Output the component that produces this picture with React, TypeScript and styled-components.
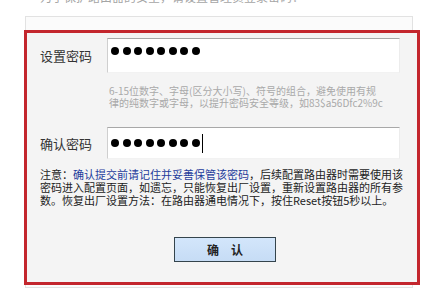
import styled, { createGlobalStyle } from 'styled-components';

// ===== global =====
const Global = createGlobalStyle`
  html, body {
    margin: 0;
    padding: 0;
    background: #ffffff;
    overflow: hidden;
  }
  body {
    font-family: 'Noto Sans CJK SC', 'Noto Sans', sans-serif;
    color: #222;
  }
`;

// ===== styled =====
const Page = styled.div`
  width: 442px;
  height: 290px;
  overflow: hidden;
`;

const CutLine = styled.div`
  margin-top: -11px;
  padding-left: 40px;
  font-size: 12px;
  line-height: 16px;
  color: #a5a5a5;
  white-space: nowrap;
`;

const Panel = styled.section`
  margin: 11px 0 0 25px;
  width: 386px;
  height: 270px;
  border: 1px solid #e2e2e2;
  background: #fbfbfb;
  display: flex;
  flex-direction: column;
`;

const Marked = styled.div`
  margin: 13px -8px 0 -2px;
  height: 244px;
  border: 3px solid #c3262d;
  background: #f4f4f4;
  display: flex;
  flex-direction: column;
  padding: 5px 0 0 13px;
`;

const FieldRow = styled.div<{ h: number }>`
  display: flex;
  align-items: center;
  height: ${({ h }) => h}px;
`;

const Label = styled.label`
  width: 67px;
  flex: none;
  font-size: 13px;
  color: #333;
  white-space: nowrap;
`;

const Field = styled.div<{ lift?: number }>`
  box-sizing: border-box;
  width: 293px;
  height: 100%;
  background: #fff;
  border: 1px solid;
  border-color: #a8a8a8 #ececec #f2f2f2 #cfcfcf;
  display: flex;
  align-items: center;
  gap: 3.5px;
  padding: 0 0 ${({ lift }) => (lift ? lift * 2 : 0)}px 3px;
`;

const Dot = styled.span`
  width: 8px;
  height: 8px;
  border-radius: 50%;
  background: #000;
  flex: none;
`;

const Caret = styled.span`
  width: 1px;
  height: 19px;
  background: #000;
  margin-left: -1px;
`;

const Hint = styled.div`
  margin: 12px 0 0 69px;
  font-size: 10px;
  line-height: 12px;
  color: #a9a9a9;
  white-space: nowrap;
`;

const Gap = styled.div<{ h: number }>`
  height: ${({ h }) => h}px;
  flex: none;
`;

const Note = styled.div`
  margin-top: 9px;
  font-size: 11px;
  line-height: 13px;
  color: #222;
  white-space: nowrap;
`;

const Em = styled.span`
  color: #1d3c9c;
`;

const Actions = styled.div`
  display: flex;
  justify-content: center;
  margin: 30px 0 0 -13px;
  padding-left: 6px;
`;

const Button = styled.button`
  box-sizing: border-box;
  width: 102px;
  height: 25px;
  border: 1px solid #34444c;
  background: linear-gradient(#d3e6fb, #c6dcf5);
  font-family: 'Noto Sans CJK SC', sans-serif;
  font-size: 12px;
  font-weight: 700;
  color: #222;
  padding: 0;
  cursor: pointer;
`;

const mask = Array.from({ length: 8 });

// ===== page =====
export default function App() {
  return (
    <Page>
      <Global />
      <CutLine>为了保护路由器的安全，请设置管理员登录密码：</CutLine>
      <Panel>
        <Marked>
          <FieldRow h={35}>
            <Label>设置密码</Label>
            <Field lift={5}>
              {mask.map((_, i) => (
                <Dot key={i} />
              ))}
            </Field>
          </FieldRow>
          <Hint>
            6-15位数字、字母(区分大小写)、符号的组合，避免使用有规
            <br />
            律的纯数字或字母，以提升密码安全等级，如83$a56Dfc2%9c
          </Hint>
          <Gap h={18} />
          <FieldRow h={32}>
            <Label>确认密码</Label>
            <Field>
              {mask.map((_, i) => (
                <Dot key={i} />
              ))}
              <Caret />
            </Field>
          </FieldRow>
          <Note>
            注意：<Em>确认提交前请记住并妥善保管该密码</Em>，后续配置路由器时需要使用该
            <br />
            密码进入配置页面，如遗忘，只能恢复出厂设置，重新设置路由器的所有参
            <br />
            数。恢复出厂设置方法：在路由器通电情况下，按住Reset按钮5秒以上。
          </Note>
          <Actions>
            <Button type="button">确&emsp;认</Button>
          </Actions>
        </Marked>
      </Panel>
    </Page>
  );
}
